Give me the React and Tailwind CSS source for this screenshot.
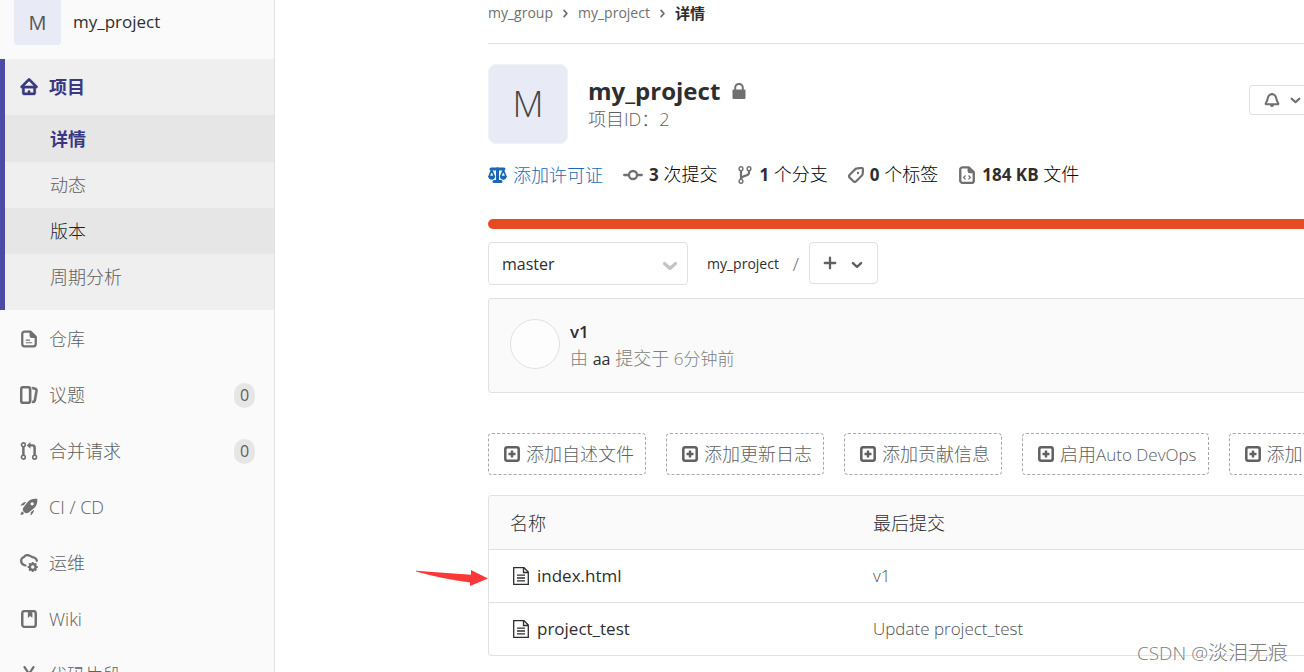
import React from "react";

function Icon({ children, className = "size-4", viewBox = "0 0 16 16" }) {
  return (
    <svg viewBox={viewBox} className={`shrink-0 ${className}`} fill="none" stroke="none" aria-hidden="true">
      {children}
    </svg>
  );
}

const HomeIcon = () => (
  <Icon className="size-[18px]">
    <path
      fill="currentColor"
      stroke="currentColor"
      strokeWidth="0.4"
      fillRule="evenodd"
      d="M3.7 7h8.7L8.07 2.6 3.7 7zM7 13V12a1 1 0 0 1 2 0v1h3V9H4v4h3zM14 9v4.500c0 .8-.66 1.500-1.500 1.500h-9C2.660 15 2 14.300 2 13.500V9h-.45a1.100 1.100 0 0 1-.78-1.870L6.930.9a1.500 1.500 0 0 1 2.270 0l6.170 6.230A1.100 1.100 0 0 1 14.590 9H14z"
    />
  </Icon>
);

const DocIcon = () => (
  <Icon className="size-[18px]">
    <path d="M4 1.500h5.500L14 6v6.500a2 2 0 0 1-2 2H4a2 2 0 0 1-2-2v-9a2 2 0 0 1 2-2z" stroke="currentColor" strokeWidth="2" strokeLinejoin="round" />
    <path d="M8.500 1v4a2 2 0 0 0 2 2h4.500L9 1z" fill="currentColor" />
    <path d="M5.500 9h3M5.500 11.300h5" stroke="currentColor" strokeLinecap="round" />
  </Icon>
);

const IssuesIcon = () => (
  <Icon className="size-[18px]">
    <path
      fill="currentColor"
      stroke="currentColor"
      strokeWidth="0.3"
      d="M10.458 15.012l.311.055a3 3 0 0 0 3.476-2.433l1.389-7.879A3 3 0 0 0 13.200 1.280L11.230.933a3.002 3.002 0 0 0-.824-.031c.364.590.580 1.280.593 2.020l1.854.328a1 1 0 0 1 .811 1.158l-1.389 7.879a1 1 0 0 1-1.158.810l-.118-.020a3.980 3.980 0 0 1-.541 1.935zM3 0h4a3 3 0 0 1 3 3v10a3 3 0 0 1-3 3H3a3 3 0 0 1-3-3V3a3 3 0 0 1 3-3zm0 2a1 1 0 0 0-1 1v10a1 1 0 0 0 1 1h4a1 1 0 0 0 1-1V3a1 1 0 0 0-1-1H3z"
    />
  </Icon>
);

const MergeIcon = () => (
  <Icon className="size-[18px]">
    <g stroke="currentColor" strokeWidth="1.400">
      <circle cx="3" cy="2.500" r="1.700" />
      <circle cx="3" cy="13.500" r="1.700" />
      <circle cx="13" cy="13.500" r="1.700" />
    </g>
    <path d="M3 4.500v7M13 11.500V5a2 2 0 0 0-2-2H8.500" stroke="currentColor" strokeWidth="2.200" />
    <path d="M9.300 0v6L6 3l3.300-3z" fill="currentColor" />
  </Icon>
);

const RocketIcon = () => (
  <Icon className="size-[18px]">
    <path
      fill="currentColor"
      fillRule="evenodd"
      d="M15.300.7c-3.500-.4-6.300.5-8.500 2.900L3.200 8.300c-1 1.300-.9 2.600 0 3.600l.9.9c1 .9 2.300 1 3.600 0l4.700-3.600c2.400-2.200 3.300-5 2.900-8.500zM10.800 3.700a1.500 1.500 0 1 1 0 3 1.500 1.500 0 0 1 0-3z"
    />
    <path fill="currentColor" d="M5.600 3.500C3.500 3.300 1.500 4.800.4 6.900c1-.5 2-.6 2.900-.4l2.300-3zM12.500 10.400c.2 2.100-1.300 4.100-3.400 5.200.5-1 .6-2 .4-2.900l3-2.300zM2.300 12.100c-1 .2-1.600 1.200-1.800 3 1.500-.2 2.600-.6 3-1.600l-1.200-1.400z" />
  </Icon>
);

const CloudGearIcon = () => (
  <Icon className="size-[18px]">
    <path d="M4.800 10.200C2.500 9.700 1 8.200 1 6.100 1 3.900 2.700 3 3.500 2.700 4.600 1.100 6.800.7 8.600 1.500c1 .4 1.700.8 2.300 1.200 2.200.2 3.700 1.100 4.100 3.300" stroke="currentColor" strokeWidth="2" strokeLinecap="round" />
    <circle cx="11.300" cy="11.500" r="2.500" stroke="currentColor" strokeWidth="2" />
    <path d="M11.300 7v2M11.300 14v2M6.800 11.500h2M13.800 11.500h2M8.100 8.300l1.400 1.400M13.100 13.300l1.400 1.400M8.100 14.700l1.400-1.400M13.100 9.700l1.400-1.400" stroke="currentColor" strokeWidth="1.700" />
  </Icon>
);

const BookIcon = () => (
  <Icon className="size-[18px]">
    <rect x="2" y="1" width="12" height="14" rx="2" stroke="currentColor" strokeWidth="2.200" />
    <path d="M7 1h4v6L9 5.300 7 7V1z" fill="currentColor" />
  </Icon>
);

const SnippetIcon = () => (
  <Icon className="size-[18px]">
    <path d="M4 1l6 9M12 1l-6 9" stroke="currentColor" strokeWidth="2" strokeLinecap="round" />
    <circle cx="4" cy="12.500" r="2" stroke="currentColor" strokeWidth="1.600" />
    <circle cx="12" cy="12.500" r="2" stroke="currentColor" strokeWidth="1.600" />
  </Icon>
);

const Chevron = ({ className }) => (
  <Icon className={className}>
    <path d="M2.500 5.500l5.500 5 5.500-5" stroke="currentColor" strokeWidth="3.200" strokeLinecap="round" strokeLinejoin="round" />
  </Icon>
);

const ScaleIcon = () => (
  <Icon className="h-4 w-[19px]" viewBox="0 0 19 16">
    <path d="M3 1.900h13M9.500 1.500V14M6 14.500h7" stroke="currentColor" strokeWidth="3" strokeLinecap="round" />
    <path d="M3.700 3L1 9.500h5.400L3.700 3zM15.300 3l-2.700 6.500H18L15.300 3z" stroke="currentColor" strokeWidth="1.700" strokeLinejoin="round" />
    <path d="M.3 9h6.800c0 2-1.300 3.800-3.400 3.800S.3 11 .3 9zM11.900 9h6.800c0 2-1.300 3.800-3.400 3.800S11.900 11 11.900 9z" fill="currentColor" />
  </Icon>
);

const CommitIcon = () => (
  <Icon className="h-4 w-5" viewBox="0 0 20 16">
    <circle cx="10" cy="8" r="4" stroke="currentColor" strokeWidth="2.300" />
    <path d="M1.200 8h4.300M14.500 8h4.300" stroke="currentColor" strokeWidth="2.300" strokeLinecap="round" />
  </Icon>
);

const BranchIcon = () => (
  <Icon className="h-[18px] w-4" viewBox="0 0 16 18">
    <g stroke="currentColor" strokeWidth="1.400">
      <circle cx="4" cy="2.700" r="1.900" />
      <circle cx="12" cy="2.700" r="1.900" />
      <circle cx="4" cy="15.300" r="1.900" />
    </g>
    <path d="M4 5v8M12 5v1.500c0 1.500-.8 2.300-2.200 2.800L6.500 10.400C5 11 4.200 11.600 4 13" stroke="currentColor" strokeWidth="2.200" />
  </Icon>
);

const TagIcon = () => (
  <Icon>
    <path d="M9 1.300l4.500-.3A1.400 1.400 0 0 1 15 2.400l-.3 4.600a2 2 0 0 1-.6 1.300l-5.900 6a2 2 0 0 1-2.800 0l-3.700-3.700a2 2 0 0 1 0-2.800L7.600 1.900A2 2 0 0 1 9 1.300z" stroke="currentColor" strokeWidth="2.200" />
    <circle cx="10" cy="6" r="1.200" fill="currentColor" />
  </Icon>
);

const CodeFileIcon = () => (
  <Icon className="size-[18px]">
    <path d="M4 1.200h5.500L14 5.500V13a2 2 0 0 1-2 2H4a2 2 0 0 1-2-2V3.200a2 2 0 0 1 2-2z" stroke="currentColor" strokeWidth="2.100" strokeLinejoin="round" />
    <path d="M8.500 1v3.500a2 2 0 0 0 2 2H15L9 1z" fill="currentColor" />
    <path d="M6.700 8.500L5 10.200l1.700 1.700M9.300 8.500l1.700 1.700-1.700 1.700" stroke="currentColor" strokeWidth="1.100" />
  </Icon>
);

const LockIcon = () => (
  <Icon className="h-4 w-[14px]" viewBox="0 0 14 16">
    <path d="M3.200 8V4.700a3.800 3.800 0 0 1 7.600 0V8" stroke="currentColor" strokeWidth="2" />
    <rect x="0.500" y="6.500" width="13" height="9.500" rx="1" fill="currentColor" />
  </Icon>
);

const BellIcon = () => (
  <Icon>
    <path d="M8 2.200c-2.300 0-3.700 1.500-4.200 3.800-.3 2.200-.8 3.500-2 5.300-.3.500 0 1 .5 1h11.400c.5 0 .8-.5.5-1C13 9.500 12.500 8.200 12.200 6c-.5-2.300-1.900-3.800-4.200-3.800z" stroke="currentColor" strokeWidth="2" />
    <path d="M6 13h4c0 1.300-.8 2-2 2s-2-.7-2-2zM7 .9h2V2.500H7z" fill="currentColor" />
  </Icon>
);

const PlusSquareIcon = () => (
  <Icon>
    <rect x="1.300" y="1.300" width="13.400" height="13.400" rx="2" stroke="currentColor" strokeWidth="2.500" />
    <path d="M8 4.500v7M4.500 8h7" stroke="currentColor" strokeWidth="2.400" />
  </Icon>
);

const FileIcon = () => (
  <Icon className="h-[18px] w-4" viewBox="0 0 16 18">
    <path d="M.7.700h10.300l4.300 4.300v12.300H.7V.7zM10.500.7v4.800h4.800M4 8.200h8M4 11h8M4 13.800h8" stroke="currentColor" strokeWidth="1.300" />
  </Icon>
);

const subItems = [
  { label: "详情", style: "bg-[#e6e6e6] font-bold text-[#393982]" },
  { label: "动态", style: "text-[#606060]" },
  { label: "版本", style: "bg-[#e6e6e6] text-[#1f1f1f]" },
  { label: "周期分析", style: "text-[#606060]" },
];

const navItems = [
  { label: "仓库", icon: DocIcon },
  { label: "议题", icon: IssuesIcon, count: 0 },
  { label: "合并请求", icon: MergeIcon, count: 0 },
  { label: "CI / CD", icon: RocketIcon },
  { label: "运维", icon: CloudGearIcon },
  { label: "Wiki", icon: BookIcon },
  { label: "代码片段", icon: SnippetIcon },
];

const stats = [
  { icon: CommitIcon, value: "3", label: "次提交" },
  { icon: BranchIcon, value: "1", label: "个分支" },
  { icon: TagIcon, value: "0", label: "个标签" },
  { icon: CodeFileIcon, value: "184 KB", label: "文件" },
];

const suggestions = [
  { label: "添加自述文件" },
  { label: "添加更新日志" },
  { label: "添加贡献信息" },
  { label: "启用", product: "Auto DevOps" },
  { label: "添加", product: "Kubernetes" },
];

const files = [
  { name: "index.html", commit: "v1" },
  { name: "project_test", commit: "Update project_test" },
];

function Sidebar() {
  return (
    <nav className="w-[275px] shrink-0 border-r border-[#e1e1e1] bg-[#fafafa]">
      <a href="#project" className="flex h-[59px] items-start gap-3 pl-[14px] font-normal text-[#2e2e2e]">
        <span className="flex h-[45px] w-[47px] items-center justify-center rounded-b-sm bg-[#e8eaf6] text-xl text-[#555]">M</span>
        <span className="flex h-[43px] items-center text-[17px] font-medium">my_project</span>
      </a>
      <div className="border-l-[5px] border-[#4b4ba3] bg-[#efefef] pb-[10px]">
        <a href="#home" className="flex h-14 items-center gap-[11px] pl-[15px] font-bold text-[#393982]">
          <HomeIcon />
          项目
        </a>
        {subItems.map((item) => (
          <a key={item.label} href="#sub" className={`flex h-[46px] items-center pl-[45px] nth-2:h-[47px] ${item.style}`}>
            {item.label}
          </a>
        ))}
      </div>
      <div className="pt-px">
        {navItems.map(({ label, icon: NavIcon, count }) => (
          <a key={label} href="#nav" className="flex h-14 items-center gap-[11px] pr-[19px] pl-5 text-[#606060]">
            <span className="text-[#707070]"><NavIcon /></span>
            <span>{label}</span>
            {count !== undefined && (
              <span className="ml-auto flex h-[25px] w-[21px] items-center justify-center rounded-full bg-[#e6e6e6] text-base font-normal">
                {count}
              </span>
            )}
          </a>
        ))}
      </div>
    </nav>
  );
}

export default function App() {
  return (
    <div className="relative flex h-screen overflow-hidden bg-white font-['Open_Sans','Noto_Sans_CJK_SC',sans-serif] text-[18px] leading-6 font-light text-[#2e2e2e]">
      <Sidebar />
      <main className="min-w-0 flex-1 pl-[213px]">
        <div className="flex h-11 items-start gap-2 border-b border-[#e1e1e1] pt-px text-[14px] font-normal text-[#707070]">
          <a href="#group">my_group</a>
          <span className="flex h-6 items-center"><Chevron className="size-[9px] -rotate-90" /></span>
          <a href="#project">my_project</a>
          <span className="flex h-6 items-center"><Chevron className="size-[9px] -rotate-90" /></span>
          <a href="#details" className="text-[15px] font-bold text-[#2e2e2e]">详情</a>
        </div>

        <header className="mt-5 flex h-20 items-center">
          <div className="flex size-20 items-center justify-center rounded-lg border border-[#f2f2f4] bg-[#e8eaf6] text-[36px] text-[#444]">M</div>
          <div className="mb-px ml-5">
            <h1 className="mb-[2px] flex items-center gap-3 text-[24px] leading-7 font-bold">
              my_project
              <span className="text-[#707070]"><LockIcon /></span>
            </h1>
            <p className="text-[#606060]">项目ID：2</p>
          </div>
          <button aria-label="通知" className="mb-2 ml-auto flex h-[30px] w-[55px] items-center gap-[10px] rounded-l-sm border border-r-0 border-[#e1e1e1] pl-[14px] text-[#707070]">
            <BellIcon />
            <Chevron className="size-[11px]" />
          </button>
        </header>

        <div className="mt-[18px] flex items-center gap-5 text-black">
          <a href="#license" className="flex items-center gap-[6px] text-[#1b69b6]">
            <ScaleIcon />
            添加许可证
          </a>
          {stats.map(({ icon: StatIcon, value, label }) => (
            <a key={label} href="#stat" className="flex items-center gap-[6px]">
              <span className="text-[#707070]"><StatIcon /></span>
              <span>
                <strong className="text-[17px] font-bold text-[#2e2e2e]">{value}</strong> {label}
              </span>
            </a>
          ))}
        </div>

        <div className="mt-8 h-[10px] rounded-l-full bg-[#e44b23]" />

        <div className="mt-[13px] flex items-start text-[14px] font-normal">
          <div className="relative">
            <select aria-label="分支" className="h-[43px] w-[200px] appearance-none rounded-sm border border-[#e1e1e1] bg-white pl-[13px] text-[16px]">
              <option>master</option>
            </select>
            <span className="pointer-events-none absolute inset-y-0 right-[10px] flex items-center pt-1 text-[#c4c4c4]">
              <Chevron className="size-4" />
            </span>
          </div>
          <a href="#root" className="ml-[19px] flex h-[43px] items-center">my_project</a>
          <span className="flex h-[43px] w-[30px] items-center justify-center pl-1 text-lg font-light text-[#606060]">/</span>
          <button aria-label="添加到目录" className="flex h-[42px] w-[69px] items-center gap-[14px] rounded-sm border border-[#e1e1e1] pl-[13px] text-[#606060]">
            <Icon className="size-[14px]">
              <path d="M8 2v12M2 8h12" stroke="currentColor" strokeWidth="2.600" strokeLinecap="round" />
            </Icon>
            <span className="pt-[3px]"><Chevron className="size-3" /></span>
          </button>
        </div>

        <section className="mt-[13px] flex h-[95px] items-center rounded-l-sm border border-r-0 border-[#e1e1e1] bg-[#fafafa] pb-[3px] pl-[21px]">
          <span className="size-[50px] rounded-full border border-[#e1e1e1] bg-[#fdfdfd]" />
          <div className="ml-[10px] pt-[3px] leading-[26px]">
            <p className="text-[17px] font-semibold">v1</p>
            <p className="text-[#808080]">
              由 <a href="#author" className="text-[16px] font-normal text-[#2e2e2e]">aa</a> 提交于 <span className="text-[17px]">6分钟前</span>
            </p>
          </div>
        </section>

        <div className="mt-10 flex gap-5 overflow-hidden">
          {suggestions.map(({ label, product }) => (
            <button key={label} className="flex h-[42px] shrink-0 items-center gap-[6px] rounded-sm border border-dashed border-[#a8a8a8] pr-[11px] pl-[15px] whitespace-nowrap text-[#606060]">
              <PlusSquareIcon />
              <span>
                {label}
                {product && <span className="text-[17px]">{product}</span>}
              </span>
            </button>
          ))}
        </div>

        <div className="relative mt-5">
          <div className="overflow-hidden rounded-l-sm border border-r-0 border-[#e1e1e1]">
            <table className="w-full table-fixed border-collapse text-left">
              <thead className="bg-[#fafafa]">
                <tr className="h-[53px]">
                  <th className="w-[363px] pt-[2px] pl-[21px] font-light">名称</th>
                  <th className="pt-[2px] pl-[21px] font-light">最后提交</th>
                </tr>
              </thead>
              <tbody>
                {files.map((file) => (
                  <tr key={file.name} className="h-[53px] border-t border-[#e1e1e1] text-[17px]">
                    <td className="pl-6">
                      <a href="#file" className="flex items-center gap-2 font-normal">
                        <FileIcon />
                        {file.name}
                      </a>
                    </td>
                    <td className="pl-[21px] text-[#505050]">{file.commit}</td>
                  </tr>
                ))}
              </tbody>
            </table>
          </div>
          <svg viewBox="0 0 72 17" className="absolute top-[75px] -left-[72px] h-[17px] w-[72px]" aria-hidden="true">
            <path d="M0 .8L55 4.800V0l17 8.500L54 16v-3.500C34 10 16 6 0 1.500z" fill="#fb3838" />
          </svg>
        </div>
      </main>
      <p className="absolute right-4 bottom-[7px] text-[20px] text-[#7c7c7c] text-shadow-[1px_1px_1px_#fff]">
        <span className="text-[19px]">CSDN @</span>淡泪无痕
      </p>
    </div>
  );
}
